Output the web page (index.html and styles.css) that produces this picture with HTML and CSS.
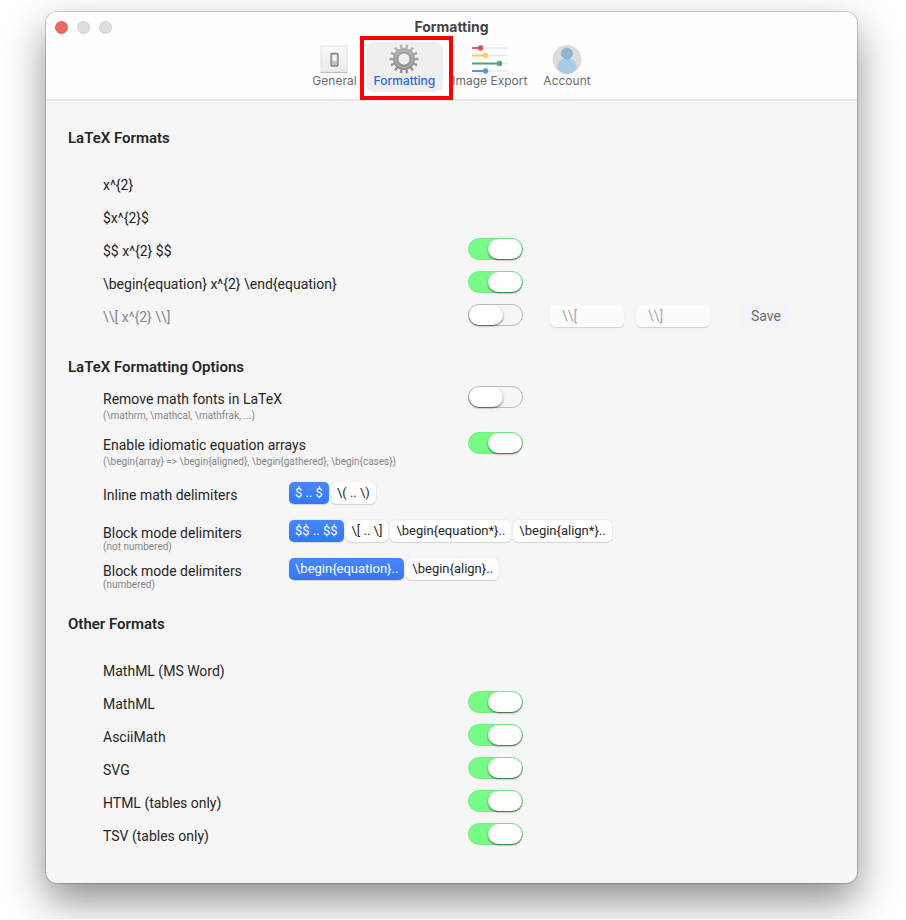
FILE: index.html
```html
<!DOCTYPE html>
<html lang="en">
<head>
    <meta charset="UTF-8">
    <meta name="viewport" content="width=device-width, initial-scale=1.0">
    <title>Formatting</title>
    <link rel="stylesheet" href="styles.css">
</head>
<body>
    <div class="window">
        <header>
            <div class="titlebar">
                <div class="lights">
                    <button class="light close" aria-label="Close"></button>
                    <button class="light" aria-label="Minimize" disabled></button>
                    <button class="light" aria-label="Zoom" disabled></button>
                </div>
                <h1>Formatting</h1>
            </div>
            <nav class="tabs">
                <button class="tab">
                    <svg width="30" height="30" viewBox="0 0 30 30">
                        <defs>
                            <linearGradient id="plate" x1="0" y1="0" x2="0" y2="1">
                                <stop offset="0" stop-color="#f9f9f9"/>
                                <stop offset="1" stop-color="#e9eaeb"/>
                            </linearGradient>
                        </defs>
                        <rect x="2" y="2" width="26" height="26" fill="url(#plate)" stroke="#dfe0e1"/>
                        <path d="M1.500 28.500h27" stroke="#c0c1c3"/>
                        <rect x="12" y="9.500" width="7" height="12.500" rx="1" fill="#c2c2c2" stroke="#858585" stroke-width="1.300"/>
                        <rect x="13.500" y="11" width="4" height="6" fill="#f4f4f4"/>
                    </svg>
                    <span>General</span>
                </button>
                <button class="tab active">
                    <svg width="30" height="30" viewBox="0 0 30 30">
                        <defs>
                            <linearGradient id="metal" x1="0" y1="0" x2="0" y2="30" gradientUnits="userSpaceOnUse">
                                <stop offset="0" stop-color="#b4b4b4"/>
                                <stop offset="1" stop-color="#858585"/>
                            </linearGradient>
                        </defs>
                        <g fill="none" stroke="url(#metal)">
                            <circle cx="15" cy="15" r="12.500" stroke-width="4" pathLength="280" stroke-dasharray="8 12" stroke-dashoffset="4"/>
                            <circle cx="15" cy="15" r="8.500" stroke-width="5"/>
                        </g>
                        <circle cx="15" cy="15" r="6.200" fill="none" stroke="#858585" stroke-width=".8"/>
                        <circle cx="15" cy="15" r="8.500" fill="none" stroke="#bcbcbc"/>
                    </svg>
                    <span>Formatting</span>
                </button>
                <button class="tab">
                    <svg width="38" height="30" viewBox="0 0 38 30">
                        <g fill="none" stroke="#e1e8f4" stroke-width="1.500">
                            <path d="M1 4h36M1 11.500h36M1 19.500h36M1 27h36"/>
                        </g>
                        <g fill="none" stroke-width="2">
                            <path d="M1 4h9" stroke="#e35a68"/>
                            <path d="M1 11.500h14" stroke="#f9ce4c"/>
                            <path d="M1 19.500h28" stroke="#47ac6c"/>
                            <path d="M1 27h14" stroke="#4d98ee"/>
                        </g>
                        <circle cx="9.500" cy="4" r="2.700" fill="#e0485b"/>
                        <circle cx="14.500" cy="11.500" r="2.700" fill="#f9ce4c"/>
                        <circle cx="28.500" cy="19.500" r="2.700" fill="#47ac6c"/>
                        <circle cx="14.500" cy="27" r="2.700" fill="#4d98ee"/>
                    </svg>
                    <span>Image Export</span>
                </button>
                <button class="tab">
                    <svg width="30" height="30" viewBox="0 0 30 30">
                        <circle cx="15" cy="15.500" r="14.500" fill="#dcdcdb"/>
                        <path d="M15 14c-5 0-9.500 4-10 9.500 2.500 4 6 6.500 10 6.500s7.500-2.500 10-6.500C24.500 18 20 14 15 14z" fill="#a9cbe6"/>
                        <circle cx="15" cy="9.500" r="5.500" fill="#8fb6d3" stroke="#7fa9c8" stroke-width=".7"/>
                    </svg>
                    <span>Account</span>
                </button>
            </nav>
        </header>

        <main>
            <section class="formats">
                <h2>LaTeX Formats</h2>
                <div class="row"><span class="name">x^{2}</span></div>
                <div class="row"><span class="name">$x^{2}$</span></div>
                <div class="row">
                    <label class="name" for="dollars">$$ x^{2} $$</label>
                    <input class="toggle" type="checkbox" id="dollars" checked>
                </div>
                <div class="row">
                    <label class="name" for="equation">\begin{equation} x^{2} \end{equation}</label>
                    <input class="toggle" type="checkbox" id="equation" checked>
                </div>
                <div class="row">
                    <label class="name muted" for="custom">\\[ x^{2} \\]</label>
                    <input class="toggle" type="checkbox" id="custom">
                    <div class="custom">
                        <input type="text" placeholder="\\[" aria-label="Left delimiter">
                        <input type="text" placeholder="\\]" aria-label="Right delimiter">
                        <button class="save">Save</button>
                    </div>
                </div>
            </section>

            <section class="options">
                <h2>LaTeX Formatting Options</h2>
                <div class="row tall">
                    <label class="name" for="fonts">Remove math fonts in LaTeX
                        <small>(\mathrm, \mathcal, \mathfrak, ...)</small>
                    </label>
                    <input class="toggle" type="checkbox" id="fonts">
                </div>
                <div class="row tall">
                    <label class="name" for="arrays">Enable idiomatic equation arrays
                        <small>(\begin{array} =&gt; \begin{aligned}, \begin{gathered}, \begin{cases})</small>
                    </label>
                    <input class="toggle" type="checkbox" id="arrays" checked>
                </div>
                <div class="row delims">
                    <span class="name">Inline math delimiters</span>
                    <div class="choices">
                        <button class="selected">$ .. $</button>
                        <button>\( .. \)</button>
                    </div>
                </div>
                <div class="row delims">
                    <span class="name">Block mode delimiters <small>(not numbered)</small></span>
                    <div class="choices">
                        <button class="selected">$$ .. $$</button>
                        <button>\[ .. \]</button>
                        <button>\begin{equation*}..</button>
                        <button>\begin{align*}..</button>
                    </div>
                </div>
                <div class="row delims">
                    <span class="name">Block mode delimiters <small>(numbered)</small></span>
                    <div class="choices">
                        <button class="selected">\begin{equation}..</button>
                        <button>\begin{align}..</button>
                    </div>
                </div>
            </section>

            <section class="formats">
                <h2>Other Formats</h2>
                <div class="row"><span class="name">MathML (MS Word)</span></div>
                <div class="row">
                    <label class="name" for="mathml">MathML</label>
                    <input class="toggle" type="checkbox" id="mathml" checked>
                </div>
                <div class="row">
                    <label class="name" for="asciimath">AsciiMath</label>
                    <input class="toggle" type="checkbox" id="asciimath" checked>
                </div>
                <div class="row">
                    <label class="name" for="svg">SVG</label>
                    <input class="toggle" type="checkbox" id="svg" checked>
                </div>
                <div class="row">
                    <label class="name" for="html">HTML (tables only)</label>
                    <input class="toggle" type="checkbox" id="html" checked>
                </div>
                <div class="row">
                    <label class="name" for="tsv">TSV (tables only)</label>
                    <input class="toggle" type="checkbox" id="tsv" checked>
                </div>
            </section>
        </main>
    </div>
</body>
</html>
```
FILE: styles.css
```css
* { box-sizing: border-box; }
body { margin: 0; padding: 12px 49px 36px 46px; background: #fff; font-family: Roboto, sans-serif; font-size: 14px; line-height: 20px; color: #262626; }
button, input { font: inherit; color: inherit; border: none; margin: 0; }
button { cursor: pointer; }

.window { background: #f6f6f6; border-radius: 11px; box-shadow: 0 0 0 1px rgba(0, 0, 0, 0.18), 0 18px 40px rgba(0, 0, 0, 0.45); }

header { background: #fefefe; border-bottom: 2px solid #e9e9e9; border-radius: 11px 11px 0 0; padding: 5px 9px 7px; font-family: Inter, sans-serif; }
.titlebar { display: grid; grid-template-columns: 1fr auto 1fr; align-items: center; margin-bottom: 5px; }
.lights { display: flex; gap: 9px; }
.light { width: 13px; height: 13px; padding: 0; border: 1px solid #cfcfcf; border-radius: 50%; background: #dedede; }
.light.close { background: #ec6a5f; border-color: #df6157; }
h1 { margin: 0; font-size: 14px; line-height: 20px; font-weight: 700; color: #444; }

.tabs { display: flex; justify-content: center; gap: 2px; }
.tab { position: relative; display: flex; flex-direction: column; align-items: center; padding: 2px 7px 5px; background: none; border-radius: 8px; font-size: 12px; line-height: 13px; color: #6b6b6b; white-space: nowrap; }
.tab.active { padding: 2px 8px 5px; background: #efefef; color: #2d67e0; font-weight: 500; }
/* red frame around the current tab */
.tab.active::after { content: ""; position: absolute; inset: -6px -10px -8px -6px; border: 4px solid #fe0000; z-index: 1; }

main { padding: 27px 22px 31px; }
h2 { margin: 0; font-size: 15px; line-height: 20px; font-weight: 600; }
.formats h2 { margin-bottom: 20px; }
.options { margin: 24px 0 19px; }
.options h2 { margin-bottom: 12px; }

.row { display: grid; grid-template-columns: 365px auto 1fr; align-items: center; margin-left: 35px; }
.formats .row { height: 33px; }
.formats .toggle { margin-bottom: 4px; }
.muted { color: #888; }
.row.tall, .row.delims { align-items: start; }
.row.tall { height: 46px; }
.row.delims { height: 38px; grid-template-columns: 186px 1fr; }
.delims .name { padding-top: 4px; }
.delims small { margin-top: -3px; }
small { display: block; font-size: 10px; line-height: 14px; color: #858585; }

.toggle { appearance: none; width: 55px; height: 22px; border: 1px solid #bcbcbc; border-radius: 11px; background: #f6f6f6; cursor: pointer; }
.toggle::before { content: ""; display: block; width: 34px; height: 20px; border-radius: 10px; background: #fff; box-shadow: 0 1px 2px rgba(0, 0, 0, 0.6); }
.toggle:checked { background: #77fb87; border-color: #77ed85; }
.toggle:checked::before { margin-left: auto; }
.tall .toggle { margin-top: -3px; }

.custom { display: flex; align-items: center; gap: 12px; margin: 0 0 2px 27px; }
.custom input { width: 74px; height: 22px; padding: 0 12px; border-radius: 5px; background: #fbfbfb; box-shadow: 0 1px 1px rgba(0, 0, 0, 0.15); }
.custom input::placeholder { color: #aaa; }
.save { margin-left: 19px; height: 24px; padding: 0 10px; border-radius: 5px; background: #f4f4f8; color: #6f6f6f; }

.choices { display: flex; gap: 2px; padding-top: 1px; }
.choices button { height: 22px; padding: 0 6px; border-radius: 5px; background: #fff; box-shadow: 0 0 1px rgba(0, 0, 0, 0.25), 0 1px 1px rgba(0, 0, 0, 0.12); font-size: 13px; line-height: 20px; white-space: nowrap; }
.choices .selected { background: linear-gradient(#4788f8, #3377f5); color: #fff; }
```
